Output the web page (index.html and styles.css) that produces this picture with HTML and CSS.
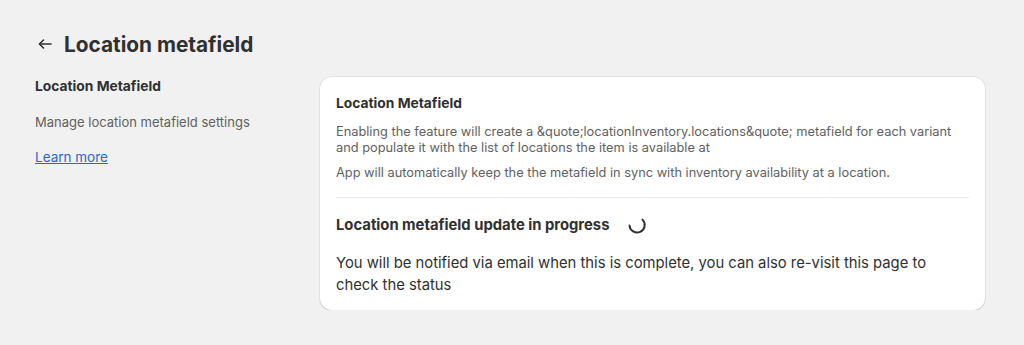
FILE: index.html
```html
<!DOCTYPE html>
<html lang="en">
<head>
    <meta charset="UTF-8">
    <meta name="viewport" content="width=device-width, initial-scale=1.0">
    <title>Location metafield</title>
    <link rel="stylesheet" href="styles.css">
</head>
<body>
    <div class="page">
        <div class="page-header">
            <a class="back-link" href="#">
                <svg width="16" height="16" viewBox="0 0 16 16" fill="none" stroke="#303030" stroke-width="1.6" stroke-linecap="round" stroke-linejoin="round">
                    <path d="M14 8H2.5"/>
                    <path d="M6.5 4L2.5 8l4 4"/>
                </svg>
            </a>
            <h1>Location metafield</h1>
        </div>

        <div class="layout">
            <div class="annotation">
                <h2>Location Metafield</h2>
                <p class="annotation-desc">Manage location metafield settings</p>
                <a class="learn-more" href="#">Learn more</a>
            </div>

            <div class="card">
                <div class="card-section">
                    <h3>Location Metafield</h3>
                    <p class="help">Enabling the feature will create a &amp;quote;locationInventory.locations&amp;quote; metafield for each variant and populate it with the list of locations the item is available at</p>
                    <p class="help">App will automatically keep the the metafield in sync with inventory availability at a location.</p>
                </div>
                <div class="card-section progress">
                    <div class="progress-title">
                        <h3>Location metafield update in progress</h3>
                        <svg class="spinner" width="20" height="20" viewBox="0 0 20 20" fill="none">
                            <path d="M15.5 4.6A7.6 7.6 0 1 1 2.5 10.5" stroke="#303030" stroke-width="2" stroke-linecap="round"/>
                        </svg>
                    </div>
                    <p class="notice">You will be notified via email when this is complete, you can also re-visit this page to check the status</p>
                </div>
            </div>
        </div>
    </div>
</body>
</html>
```

FILE: styles.css
```css
body {
    margin: 0;
    background-color: #f1f1f1;
    font-family: Inter, "Noto Sans", Arial, sans-serif;
    color: #303030;
}
.page {
    padding: 30px 39px 0 35px;
}
.page-header {
    display: flex;
    align-items: center;
    gap: 11px;
    height: 28px;
}
.back-link {
    display: flex;
    align-items: center;
    padding-left: 2px;
}
h1 {
    margin: 0;
    font-size: 20.8px;
    font-weight: 700;
    color: #303030;
}
.layout {
    display: flex;
    align-items: flex-start;
    margin-top: 18px;
}
.annotation {
    width: 285px;
}
.annotation h2 {
    margin: 0;
    font-size: 13.8px;
    font-weight: 700;
    line-height: 20px;
    color: #303030;
}
.annotation-desc {
    margin: 16px 0 0;
    font-size: 13px;
    line-height: 20px;
    color: #616161;
}
.learn-more {
    display: inline-block;
    margin-top: 15px;
    font-size: 13.5px;
    line-height: 20px;
    color: #2a67d4;
}
.card {
    flex: 1;
    background-color: white;
    border-radius: 12px;
    box-shadow: 0 1px 1px rgba(0,0,0,0.14), 0 0 0 1px rgba(0,0,0,0.05);
    margin-top: 1px;
}
.card-section {
    padding: 16px 16px 16px;
}
.card-section + .card-section {
    border-top: 1px solid #ebebeb;
    margin: 0 16px;
    padding: 16px 0 14px;
}
h3 {
    margin: 0;
    font-size: 13.8px;
    font-weight: 700;
    line-height: 20px;
    color: #303030;
}
.help {
    margin: 11px 0 0;
    font-size: 12.8px;
    line-height: 16px;
    color: #616161;
}
.help + .help {
    margin-top: 9px;
}
.progress-title {
    display: flex;
    align-items: center;
    gap: 18px;
    height: 22px;
}
.progress-title h3 {
    font-size: 14.8px;
}
.notice {
    margin: 16px 0 0;
    font-size: 14.8px;
    line-height: 22px;
    color: #303030;
    max-width: 620px;
}
```
